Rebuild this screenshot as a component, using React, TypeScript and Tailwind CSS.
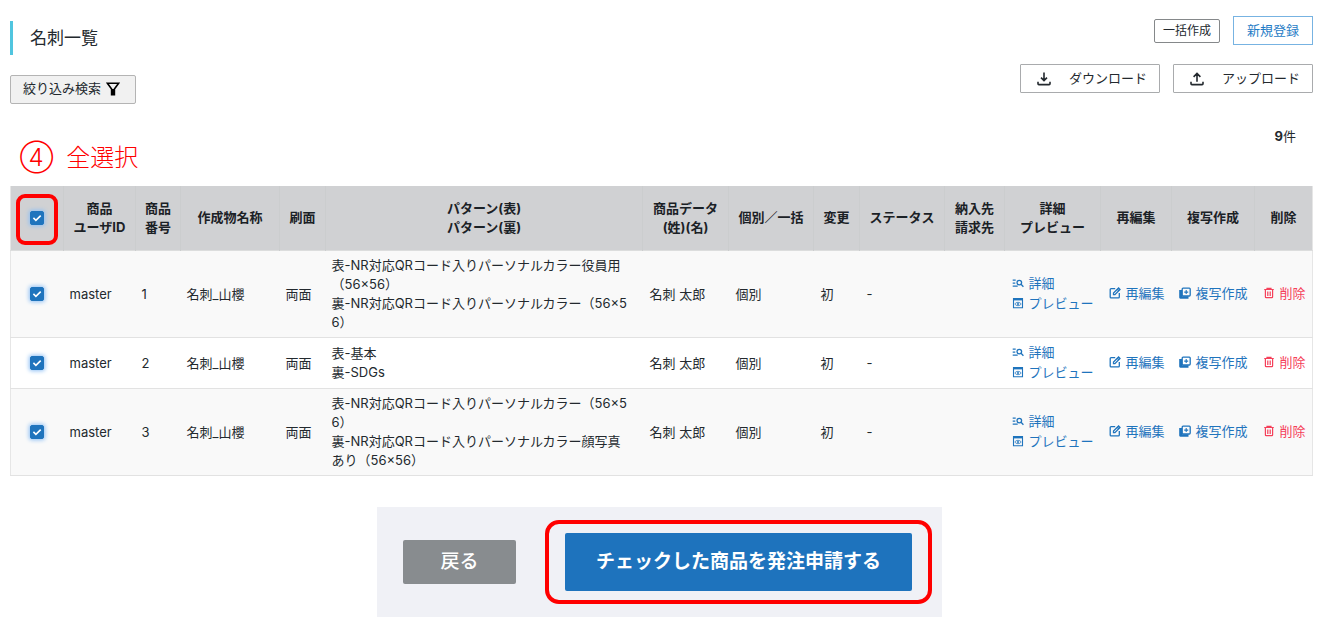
import React, { useState } from "react";

type CardItem = {
  id: number;
  user: string;
  name: string;
  side: string;
  front: string;
  back: string;
  person: string;
  kind: string;
  change: string;
  status: string;
};

type IconProps = {
  className?: string;
};

const items: CardItem[] = [
  {
    id: 1,
    user: "master",
    name: "名刺_山櫻",
    side: "両面",
    front: "表-NR対応QRコード入りパーソナルカラー役員用（56×56）",
    back: "裏-NR対応QRコード入りパーソナルカラー（56×56）",
    person: "名刺 太郎",
    kind: "個別",
    change: "初",
    status: "-",
  },
  {
    id: 2,
    user: "master",
    name: "名刺_山櫻",
    side: "両面",
    front: "表-基本",
    back: "裏-SDGs",
    person: "名刺 太郎",
    kind: "個別",
    change: "初",
    status: "-",
  },
  {
    id: 3,
    user: "master",
    name: "名刺_山櫻",
    side: "両面",
    front: "表-NR対応QRコード入りパーソナルカラー（56×56）",
    back: "裏-NR対応QRコード入りパーソナルカラー顔写真あり（56×56）",
    person: "名刺 太郎",
    kind: "個別",
    change: "初",
    status: "-",
  },
];

const columns: { lines: string[]; width: string }[] = [
  { lines: ["商品", "ユーザID"], width: "w-[72px]" },
  { lines: ["商品", "番号"], width: "w-[45px]" },
  { lines: ["作成物名称"], width: "w-[99px]" },
  { lines: ["刷面"], width: "w-[46px]" },
  { lines: ["パターン(表)", "パターン(裏)"], width: "" },
  { lines: ["商品データ", "(姓)(名)"], width: "w-[86px]" },
  { lines: ["個別／一括"], width: "w-[85px]" },
  { lines: ["変更"], width: "w-[46px]" },
  { lines: ["ステータス"], width: "w-[85px]" },
  { lines: ["納入先", "請求先"], width: "w-[60px]" },
  { lines: ["詳細", "プレビュー"], width: "w-[96px]" },
  { lines: ["再編集"], width: "w-[71px]" },
  { lines: ["複写作成"], width: "w-[83px]" },
  { lines: ["削除"], width: "w-[58px]" },
];

const FilterIcon = ({ className }: IconProps) => (
  <svg viewBox="0 0 14 14" className={className} fill="none" stroke="currentColor" strokeWidth="1.6">
    <path d="M1.4 1.3h11.2L8.4 7v5.6H5.6V7z" />
    <path d="M5.6 7h2.8v5.6H5.6z" fill="currentColor" stroke="none" />
  </svg>
);

const DownloadIcon = ({ className }: IconProps) => (
  <svg viewBox="0 0 14 14" className={className} fill="none" stroke="currentColor" strokeWidth="1.6">
    <path d="M7 .4v8M4 5.6l3 3 3-3M1 9.8v1.9q0 .9.9.9h10.2q.9 0 .9-.9V9.8" />
  </svg>
);

const UploadIcon = ({ className }: IconProps) => (
  <svg viewBox="0 0 14 14" className={className} fill="none" stroke="currentColor" strokeWidth="1.6">
    <path d="M7 9.8V1.6M3.6 4.9 7 1.5l3.4 3.4M1 9.8v1.9q0 .9.9.9h10.2q.9 0 .9-.9V9.8" />
  </svg>
);

const DetailIcon = ({ className }: IconProps) => (
  <svg viewBox="0 0 12 12" className={className} fill="none" stroke="currentColor" strokeWidth="1.3">
    <path d="M.7 3.1h3M.7 6.1h2.6M.7 9.1h5" />
    <circle cx="7.3" cy="5.6" r="2.3" />
    <path d="m9 7.3 2.4 2.5" />
  </svg>
);

const PreviewIcon = ({ className }: IconProps) => (
  <svg viewBox="0 0 12 12" className={className} fill="none" stroke="currentColor">
    <path d="M1.5 1.6h9v9.1h-9z" strokeWidth="1.1" />
    <path d="M1 1.1h10v2.3H1z" fill="currentColor" stroke="none" />
    <path d="M2.8 7C4.2 4.8 7.8 4.8 9.2 7 7.8 9.2 4.2 9.2 2.8 7z" strokeWidth=".8" />
    <circle cx="6" cy="7" r="1" fill="currentColor" stroke="none" />
  </svg>
);

const EditIcon = ({ className }: IconProps) => (
  <svg viewBox="0 0 12 12" className={className} fill="none" stroke="currentColor" strokeWidth="1.3">
    <path d="M6.2 1.7H2.1q-.9 0-.9.9v7.3q0 .9.9.9h7.3q.9 0 .9-.9V6" />
    <path d="M4.5 7.6V6.1L9.6 1l1.4 1.4-5.1 5.2z" />
    <path d="m8.3 2.2 1.6 1.6" />
  </svg>
);

const CopyIcon = ({ className }: IconProps) => (
  <svg viewBox="0 0 12 12" className={className} fill="none" stroke="currentColor" strokeWidth="1.3">
    <path d="M.2 3h2.9v6.3h6.4v2.4H1.3q-1.1 0-1.1-1.1z" fill="currentColor" stroke="none" />
    <rect x="3.2" y="1.2" width="8" height="7.8" rx=".9" />
    <path d="M7.2 3.1v4M5.2 5.1h4" strokeWidth="1.1" />
  </svg>
);

const TrashIcon = ({ className }: IconProps) => (
  <svg viewBox="0 0 12 12" className={className} fill="none" stroke="currentColor" strokeWidth="1.2">
    <path d="M1.2 2.5h9.6M4 2.3V1.4h4v.9M2.4 2.7v7.2q0 .8.8.8h5.6q.8 0 .8-.8V2.7M4.8 4.5v4.4M7.2 4.5v4.4" />
  </svg>
);

type CheckBoxProps = {
  label: string;
  checked: boolean;
  onChange: () => void;
};

const CheckBox: React.FC<CheckBoxProps> = ({ label, checked, onChange }) => (
  <span className="inline-grid place-items-center align-middle">
    <input
      type="checkbox"
      aria-label={label}
      checked={checked}
      onChange={onChange}
      className="col-start-1 row-start-1 size-3.5 appearance-none rounded-[2px] border border-[#1f74bd] bg-white shadow-[0_0_4px_1px_#8fc0f5] checked:bg-[#1f74bd]"
    />
    <svg
      viewBox="0 0 14 14"
      className="pointer-events-none col-start-1 row-start-1 size-3.5"
      fill="none"
      stroke="white"
      strokeWidth="1.6"
    >
      <path d="m3.4 6.9 2.5 2.4 4.8-4.7" />
    </svg>
  </span>
);

type ActionLinkProps = {
  icon: React.FC<IconProps>;
  text: string;
  danger?: boolean;
};

const ActionLink: React.FC<ActionLinkProps> = ({ icon: Icon, text, danger = false }) => (
  <a
    href="#"
    className={`flex items-center gap-[5px] whitespace-nowrap leading-5 hover:underline ${
      danger ? "text-[#f5405a]" : "text-[#1f74bd]"
    }`}
  >
    <Icon className="size-3 shrink-0" />
    {text}
  </a>
);

export default function App() {
  const [selected, setSelected] = useState<number[]>(items.map((item) => item.id));
  const allSelected = selected.length === items.length;

  const toggleAll = () => {
    setSelected(allSelected ? [] : items.map((item) => item.id));
  };

  const toggle = (id: number) => {
    setSelected((prev) =>
      prev.includes(id) ? prev.filter((n) => n !== id) : [...prev, id],
    );
  };

  return (
    <main className="bg-white pt-4 pr-[6px] pb-[5px] pl-[10px] font-[Inter,'Noto_Sans_CJK_JP',sans-serif] text-[13px] leading-[19px] text-[#23292e]">
      <header className="flex items-start justify-between">
        <div className="flex flex-col items-start gap-5 pt-[5px]">
          <h1 className="border-l-[3px] border-[#50c5df] pl-[17px] text-[17px] leading-[34px]">
            名刺一覧
          </h1>
          <button
            type="button"
            className="flex h-[29px] items-center gap-[5px] rounded-[2px] border border-[#b4b4b4] bg-[#f1f1f1] pr-[15px] pb-[2px] pl-3"
          >
            絞り込み検索
            <FilterIcon className="size-3.5 text-black" />
          </button>
        </div>

        <div className="flex flex-col items-end gap-[19px]">
          <div className="flex items-center gap-[13px]">
            <button
              type="button"
              className="h-6 rounded-[2px] border border-[#85888a] px-2 text-[12px]"
            >
              一括作成
            </button>
            <button
              type="button"
              className="h-[29px] border border-[#77b3e2] px-[13px] text-[#1f7cc6]"
            >
              新規登録
            </button>
          </div>
          <div className="flex gap-[13px]">
            <button
              type="button"
              className="flex h-[29px] w-[140px] items-center justify-between rounded-[1px] border border-[#a9abad] pr-3 pl-4"
            >
              <DownloadIcon className="size-3.5" />
              ダウンロード
            </button>
            <button
              type="button"
              className="flex h-[29px] w-[140px] items-center justify-between rounded-[1px] border border-[#a9abad] pr-3 pl-4"
            >
              <UploadIcon className="size-3.5" />
              アップロード
            </button>
          </div>
        </div>
      </header>

      <div className="flex h-[82px] items-start justify-between pt-[23px] pr-[17px] pl-[10px]">
        <p className="flex h-[60px] items-center gap-[13px] text-[24px] font-light text-[#ff0000]">
          <span>④</span>
          <span>全選択</span>
        </p>
        <p>
          <b className="font-bold">9</b>件
        </p>
      </div>

      <table className="w-full table-fixed border-collapse border-x border-[#e6e6e6]">
        <thead>
          <tr className="h-16 border-b border-[#dcdddd] bg-[#d0d1d3] text-[#1b2126]">
            <th className="w-[53px] px-0 pt-[3px] pb-0">
              <span className="mx-auto flex h-[51px] w-[42px] items-center justify-center rounded-[9px] border-4 border-[#ff0000] pb-[3px]">
                <CheckBox label="全選択" checked={allSelected} onChange={toggleAll} />
              </span>
            </th>
            {columns.map((col) => (
              <th
                key={col.lines.join("")}
                className={`border-l border-[#cbcdce] p-0 font-bold whitespace-nowrap ${col.width}`}
              >
                {col.lines.map((line) => (
                  <span key={line} className="block">
                    {line}
                  </span>
                ))}
              </th>
            ))}
          </tr>
        </thead>
        <tbody>
          {items.map((item) => (
            <tr key={item.id} className="border-b border-[#e2e2e2] odd:bg-[#f9f9f9]">
              <td className="p-0 text-center">
                <CheckBox
                  label={`商品番号 ${item.id}`}
                  checked={selected.includes(item.id)}
                  onChange={() => toggle(item.id)}
                />
              </td>
              <td className="px-[6px] pt-[2px]">{item.user}</td>
              <td className="px-[6px] pt-[2px]">{item.id}</td>
              <td className="px-[6px] pt-[2px]">{item.name}</td>
              <td className="px-[6px] pt-[2px]">{item.side}</td>
              <td className="py-[5px] pr-3 pl-[6px] break-all">
                {item.front}
                <br />
                {item.back}
              </td>
              <td className="px-[7px] pt-[2px]">{item.person}</td>
              <td className="px-[7px] pt-[2px]">{item.kind}</td>
              <td className="px-[7px] pt-[2px]">{item.change}</td>
              <td className="px-[7px] pt-[2px]">{item.status}</td>
              <td />
              <td className="px-[7px] pt-[4px] pb-[6px]">
                <ActionLink icon={DetailIcon} text="詳細" />
                <ActionLink icon={PreviewIcon} text="プレビュー" />
              </td>
              <td className="pb-[2px] pl-2">
                <ActionLink icon={EditIcon} text="再編集" />
              </td>
              <td className="pb-[2px] pl-[7px]">
                <ActionLink icon={CopyIcon} text="複写作成" />
              </td>
              <td className="pb-[2px] pl-2">
                <ActionLink icon={TrashIcon} text="削除" danger />
              </td>
            </tr>
          ))}
        </tbody>
      </table>

      <footer className="mt-[31px] mr-1 flex justify-center">
        <div className="flex h-[110px] items-center gap-[29px] bg-[#f0f1f6] pr-[10px] pl-[26px] text-[19px] text-white">
          <button type="button" className="h-11 w-[113px] rounded-[2px] bg-[#888c8f] font-medium">
            戻る
          </button>
          <div className="rounded-[14px] border-4 border-[#ff0000] px-4 py-[9px]">
            <button type="button" className="h-[58px] rounded-[2px] bg-[#1e73bd] px-[31px] font-bold">
              チェックした商品を発注申請する
            </button>
          </div>
        </div>
      </footer>
    </main>
  );
}
